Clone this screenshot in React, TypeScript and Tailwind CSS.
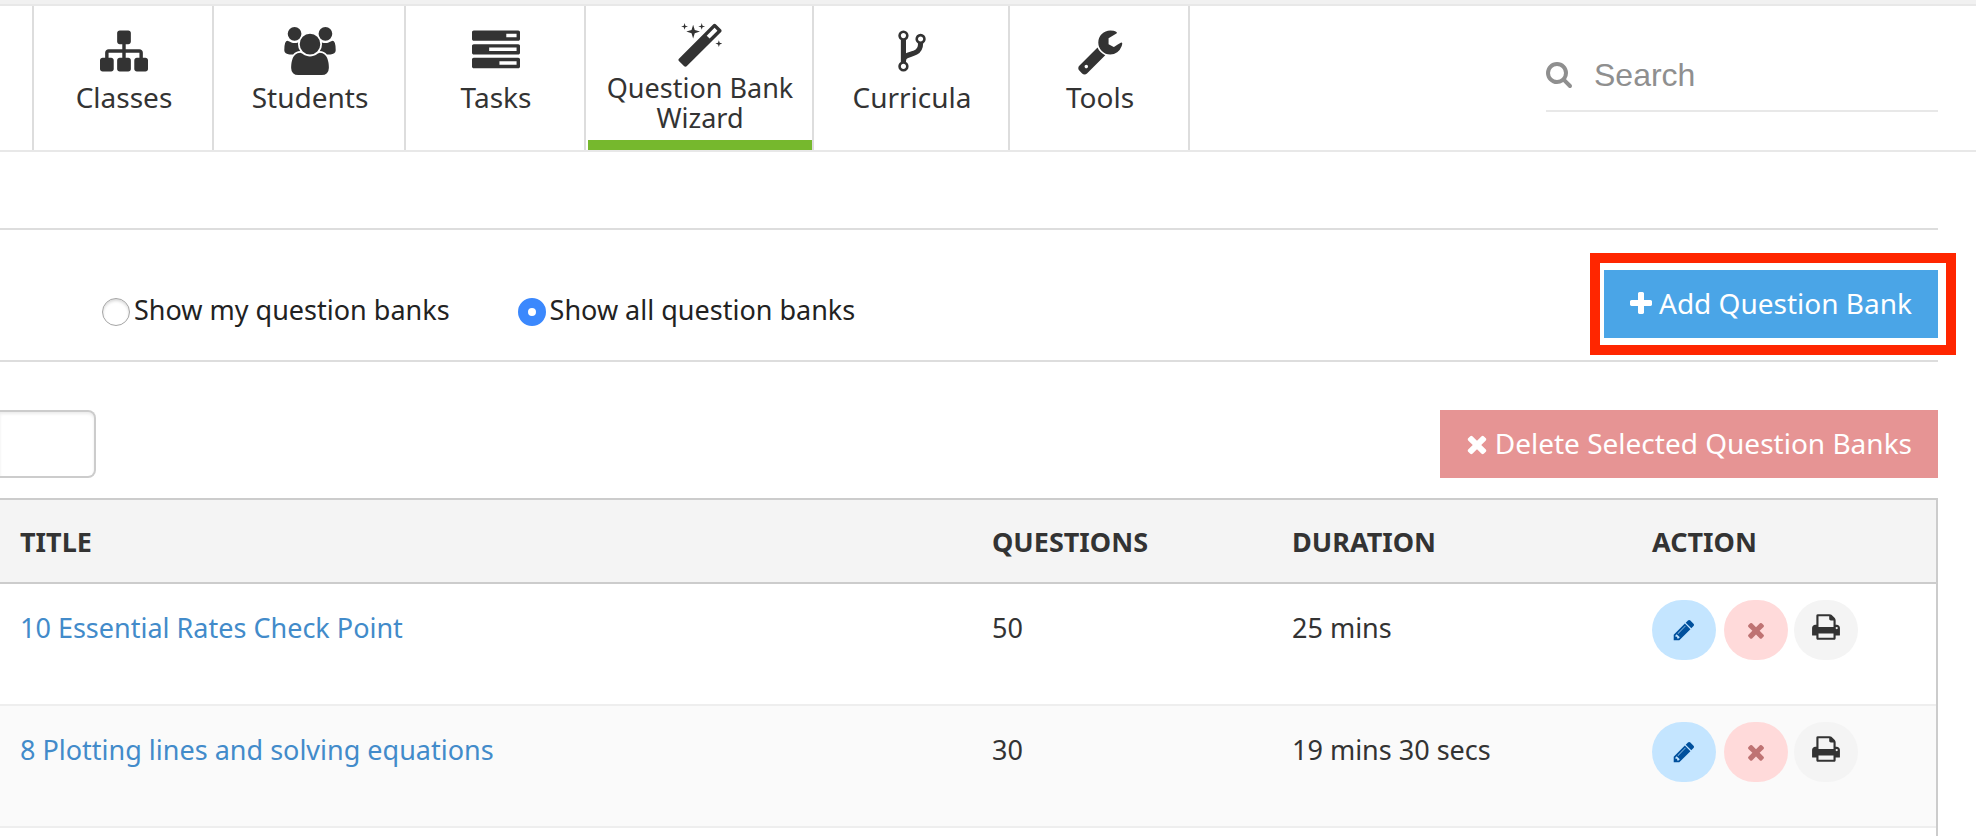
import { useState } from "react";
import clsx from "clsx";

type Glyph = { d: string; viewBox?: string };

const glyphs = {
  sitemap: {
    d: "M1792 1248v320q0 40-28 68t-68 28h-320q-40 0-68-28t-28-68v-320q0-40 28-68t68-28h96v-192h-512v192h96q40 0 68 28t28 68v320q0 40-28 68t-68 28h-320q-40 0-68-28t-28-68v-320q0-40 28-68t68-28h96v-192h-512v192h96q40 0 68 28t28 68v320q0 40-28 68t-68 28h-320q-40 0-68-28t-28-68v-320q0-40 28-68t68-28h96v-192q0-52 38-90t90-38h512v-192h-96q-40 0-68-28t-28-68v-320q0-40 28-68t68-28h320q40 0 68 28t28 68v320q0 40-28 68t-68 28h-96v192h512q52 0 90 38t38 90v192h96q40 0 68 28t28 68z",
  },
  users: {
    viewBox: "64 0 1920 1792",
    d: "M657 896q-162 5-265 128h-134q-82 0-138-40.5t-56-118.5q0-353 124-353 6 0 43.5 21t97.5 42.5 119 21.5q67 0 133-23-5 37-5 66 0 139 81 256zm1071 637q0 120-73 189.5t-194 69.5h-874q-121 0-194-69.5t-73-189.5q0-53 3.5-103.5t14-109 26.5-108.5 43-97.5 62-81 85.5-53.5 111.5-20q10 0 43 21.5t73 48 107 48 135 21.5 135-21.5 107-48 73-48 43-21.5q61 0 111.5 20t85.5 53.5 62 81 43 97.5 26.5 108.5 14 109 3.5 103.5zm-1024-1277q0 106-75 181t-181 75-181-75-75-181 75-181 181-75 181 75 75 181zm704 384q0 159-112.5 271.5t-271.5 112.5-271.5-112.5-112.5-271.5 112.5-271.5 271.5-112.5 271.5 112.5 112.5 271.5zm576 225q0 78-56 118.5t-138 40.5h-134q-103-123-265-128 81-117 81-256 0-29-5-66 66 23 133 23 59 0 119-21.5t97.5-42.5 43.5-21q124 0 124 353zm-128-609q0 106-75 181t-181 75-181-75-75-181 75-181 181-75 181 75 75 181z",
  },
  tasks: {
    d: "M1024 1408h640v-128h-640v128zm-384-512h1024v-128h-1024v128zm640-512h384v-128h-384v128zm512 832v256q0 26-19 45t-45 19h-1664q-26 0-45-19t-19-45v-256q0-26 19-45t45-19h1664q26 0 45 19t19 45zm0-512v256q0 26-19 45t-45 19h-1664q-26 0-45-19t-19-45v-256q0-26 19-45t45-19h1664q26 0 45 19t19 45zm0-512v256q0 26-19 45t-45 19h-1664q-26 0-45-19t-19-45v-256q0-26 19-45t45-19h1664q26 0 45 19t19 45z",
  },
  magic: {
    d: "M1254 581l293-293-107-107-293 293zm447-293q0 27-18 45l-1286 1286q-18 18-45 18t-45-18l-198-198q-18-18-18-45t18-45l1286-1286q18-18 45-18t45 18l198 198q18 18 18 45zm-1351-190l98 30-98 30-30 98-30-98-98-30 98-30 30-98zm350 162l196 60-196 60-60 196-60-196-196-60 196-60 60-196zm930 478l98 30-98 30-30 98-30-98-98-30 98-30 30-98zm-640-640l98 30-98 30-30 98-30-98-98-30 98-30 30-98z",
  },
  fork: {
    d: "M672 1472q0-40-28-68t-68-28-68 28-28 68 28 68 68 28 68-28 28-68zm0-1152q0-40-28-68t-68-28-68 28-28 68 28 68 68 28 68-28 28-68zm640 128q0-40-28-68t-68-28-68 28-28 68 28 68 68 28 68-28 28-68zm96 0q0 52-26 96.5t-70 69.5q-2 287-226 414-67 38-203 81-128 40-169.5 71t-41.5 100v26q44 25 70 69.5t26 96.5q0 80-56 136t-136 56-136-56-56-136q0-52 26-96.5t70-69.5v-820q-44-25-70-69.5t-26-96.5q0-80 56-136t136-56 136 56 56 136q0 52-26 96.5t-70 69.5v497q54-26 154-57 55-17 87.5-29.5t70.5-31 59-39.5 40.5-51 28-69.5 8.5-91.5q-44-25-70-69.5t-26-96.5q0-80 56-136t136-56 136 56 56 136z",
  },
  wrench: {
    d: "M448 1472q0-26-19-45t-45-19-45 19-19 45 19 45 45 19 45-19 19-45zm644-420l-682 682q-37 37-90 37-52 0-91-37l-106-108q-38-36-38-90 0-53 38-91l681-681q39 98 114.5 173.5t173.5 114.5zm634-435q0 39-23 106-47 134-164.5 217.5t-258.5 83.5q-185 0-316.5-131.5t-131.5-316.5 131.5-316.5 316.5-131.5q58 0 121.5 16.5t107.5 46.5q16 11 16 28t-16 28l-293 169v224l193 107q5-3 79-48.5t135.5-81 70.5-35.5q15 0 23.5 10t8.5 25z",
  },
  search: {
    viewBox: "64 128 1664 1664",
    d: "M1216 832q0-185-131.5-316.5t-316.5-131.5-316.5 131.5-131.5 316.5 131.5 316.5 316.5 131.5 316.5-131.5 131.5-316.5zm512 832q0 52-38 90t-90 38q-54 0-90-38l-343-342q-179 124-399 124-143 0-273.5-55.5t-225-150-150-225-55.5-273.5 55.5-273.5 150-225 225-150 273.5-55.5 273.5 55.5 225 150 150 225 55.5 273.5q0 220-124 399l343 343q37 37 37 90z",
  },
  plus: {
    viewBox: "192 0 1408 1792",
    d: "M1600 736v192q0 40-28 68t-68 28h-416v416q0 40-28 68t-68 28h-192q-40 0-68-28t-28-68v-416h-416q-40 0-68-28t-28-68v-192q0-40 28-68t68-28h416v-416q0-40 28-68t68-28h192q40 0 68 28t28 68v416h416q40 0 68 28t28 68z",
  },
  times: {
    viewBox: "192 0 1408 1792",
    d: "M1490 1322q0 40-28 68l-136 136q-28 28-68 28t-68-28l-294-294-294 294q-28 28-68 28t-68-28l-136-136q-28-28-28-68t28-68l294-294-294-294q-28-28-28-68t28-68l136-136q28-28 68-28t68 28l294 294 294-294q28-28 68-28t68 28l136 136q28 28 28 68t-28 68l-294 294 294 294q28 28 28 68z",
  },
  pencil: {
    d: "M491 1536l91-91-235-235-91 91v107h128v128h107zm523-928q0-22-22-22-10 0-17 7l-542 542q-7 7-7 17 0 22 22 22 10 0 17-7l542-542q7-7 7-17zm-54-192l416 416-832 832h-416v-416zm683 96q0 53-37 90l-166 166-416-416 166-165q36-38 90-38 53 0 91 38l235 234q37 39 37 91z",
  },
  print: {
    d: "M448 1536h896v-256h-896v256zm0-640h896v-384h-160q-40 0-68-28t-28-68v-160h-640v640zm1152 64q0-26-19-45t-45-19-45 19-19 45 19 45 45 19 45-19 19-45zm128 0v416q0 13-9.5 22.5t-22.5 9.5h-224v160q0 40-28 68t-68 28h-960q-40 0-68-28t-28-68v-160h-224q-13 0-22.5-9.5t-9.5-22.5v-416q0-79 56.5-135.5t135.5-56.5h64v-544q0-40 28-68t68-28h672q40 0 88 20t76 48l152 152q28 28 48 76t20 88v256h64q79 0 135.5 56.5t56.5 135.5z",
  },
} satisfies Record<string, Glyph>;

function Icon({ name, className }: { name: keyof typeof glyphs; className: string }) {
  const glyph: Glyph = glyphs[name];
  return (
    <svg viewBox={glyph.viewBox ?? "0 0 1792 1792"} className={clsx("shrink-0", className)} fill="currentColor" aria-hidden="true">
      <path d={glyph.d} />
    </svg>
  );
}

const navItems: { label: string; icon: keyof typeof glyphs; width: string; active?: boolean }[] = [
  { label: "Classes", icon: "sitemap", width: "w-[180px]" },
  { label: "Students", icon: "users", width: "w-[192px]" },
  { label: "Tasks", icon: "tasks", width: "w-[180px]" },
  { label: "Question Bank Wizard", icon: "magic", width: "w-[228px]", active: true },
  { label: "Curricula", icon: "fork", width: "w-[196px]" },
  { label: "Tools", icon: "wrench", width: "w-[182px]" },
];

const banks = [
  { title: "10 Essential Rates Check Point", questions: 50, duration: "25 mins" },
  { title: "8 Plotting lines and solving equations", questions: 30, duration: "19 mins 30 secs" },
];

function Header() {
  return (
    <header className="flex justify-between border-b-2 border-[#e8e8e8]">
      <nav className="flex h-36 pl-8">
        {navItems.map((item) => (
          <a
            key={item.label}
            href="#"
            aria-current={item.active ? "page" : undefined}
            className={clsx("flex flex-col border-l-2 border-[#ddd] pl-0.5 text-center text-[#333] last:border-r-2", item.width)}
          >
            <span className={clsx("flex flex-1 flex-col items-center", item.active ? "gap-0.5 px-4 pt-[17px]" : "pt-[21px]")}>
              <Icon name={item.icon} className="h-12 w-[52px]" />
              <span className={item.active ? "text-[27px] leading-[30px]" : "text-[28px] leading-[44px]"}>{item.label}</span>
            </span>
            {item.active && <span className="h-[10px] bg-[#76b82d]" />}
          </a>
        ))}
      </nav>
      <label className="mr-[38px] mt-9 flex h-[70px] w-[392px] items-center gap-[22px] border-b-2 border-[#e8e8e8] pb-0.5 text-[#8f8f8f]">
        <Icon name="search" className="size-[26px]" />
        <input
          type="search"
          aria-label="Search"
          placeholder="Search"
          className="min-w-0 flex-1 bg-transparent font-['Liberation_Sans',Arial,sans-serif] text-[32px] outline-none placeholder:text-[#8f8f8f]"
        />
      </label>
    </header>
  );
}

function ScopeRadio({ label, checked, onSelect }: { label: string; checked: boolean; onSelect: () => void }) {
  return (
    <label className="flex items-center gap-1 text-[27px] leading-6 text-[#222]">
      <input
        type="radio"
        name="scope"
        checked={checked}
        onChange={onSelect}
        className="size-7 appearance-none rounded-full border border-[#a5a5a5] bg-white shadow-[inset_0_2px_3px_rgba(0,0,0,0.15)] checked:border-10 checked:border-[#3b88fd] checked:shadow-none"
      />
      <span className="pb-1">{label}</span>
    </label>
  );
}

function RowActions({ title }: { title: string }) {
  return (
    <div className="flex">
      <button type="button" aria-label={`Edit ${title}`} className="mr-2 flex h-[60px] w-16 items-center justify-center rounded-[30px] bg-[#c4e5ff] text-[#00509d]">
        <Icon name="pencil" className="size-6" />
      </button>
      <button type="button" aria-label={`Delete ${title}`} className="mr-1.5 flex h-[60px] w-16 items-center justify-center rounded-[30px] bg-[#ffdada] text-[#bf7373]">
        <Icon name="times" className="size-6" />
      </button>
      <button type="button" aria-label={`Print ${title}`} className="flex h-[60px] w-16 items-center justify-center rounded-[30px] bg-[#f4f4f4] pb-1.5 text-[#333]">
        <Icon name="print" className="size-[30px]" />
      </button>
    </div>
  );
}

export default function App() {
  const [scope, setScope] = useState<"mine" | "all">("all");

  return (
    <div className="flex min-h-screen flex-col bg-white font-['Noto_Sans',sans-serif] text-[#333]">
      <div className="h-1.5 border-b-2 border-[#e8e8e8] bg-[#f1f1f1]" />
      <Header />
      <main className="mr-[38px] flex flex-1 flex-col pt-[76px]">
        <section className="flex items-end justify-between border-y-2 border-[#ddd] pt-10 pb-[22px]">
          <div className="flex gap-[68px] pb-3 pl-[102px]">
            <ScopeRadio label="Show my question banks" checked={scope === "mine"} onSelect={() => setScope("mine")} />
            <ScopeRadio label="Show all question banks" checked={scope === "all"} onSelect={() => setScope("all")} />
          </div>
          <div className="relative">
            <button type="button" className="flex h-[68px] items-center gap-[7px] bg-[#4aa5e7] px-[26px] text-[28px] text-white">
              <Icon name="plus" className="h-7 w-[22px]" />
              <span className="pb-0.5">Add Question Bank</span>
            </button>
            <span className="pointer-events-none absolute -top-[17px] -right-[18px] -bottom-[17px] -left-[14px] border-10 border-[#ff2600]" />
          </div>
        </section>

        <div className="flex justify-between pt-12 pb-5">
          <input
            type="text"
            aria-label="Filter question banks"
            className="h-[68px] w-24 rounded-r-lg border-2 border-l-0 border-[#ccc] px-4 text-[28px] shadow-[inset_0_2px_3px_rgba(0,0,0,0.08)] outline-none"
          />
          <button type="button" className="flex h-[68px] items-center gap-[7px] bg-[#e69494] px-[26px] text-[28px] text-white">
            <Icon name="times" className="h-7 w-[22px]" />
            <span className="pb-0.5">Delete Selected Question Banks</span>
          </button>
        </div>

        <div className="flex-1 border-t-2 border-r-2 border-[#ccc]">
          <table className="w-full table-fixed border-separate border-spacing-0 text-left">
            <thead>
              <tr className="h-[84px] bg-[#f4f4f4] text-[27px] uppercase">
                <th className="border-b-2 border-[#ccc] px-5 pt-0.5">Title</th>
                <th className="w-[300px] border-b-2 border-[#ccc] px-5 pt-0.5">Questions</th>
                <th className="w-[360px] border-b-2 border-[#ccc] px-5 pt-0.5">Duration</th>
                <th className="w-[304px] border-b-2 border-[#ccc] px-5 pt-0.5">Action</th>
              </tr>
            </thead>
            <tbody>
              {banks.map((bank) => (
                <tr key={bank.title} className="h-[122px] align-top text-[27px] leading-[56px] even:bg-[#fafafa]">
                  <td className="border-b-2 border-[#eee] px-5 pt-4">
                    <a href="#" className="text-[#428bca]">
                      {bank.title}
                    </a>
                  </td>
                  <td className="border-b-2 border-[#eee] px-5 pt-4">{bank.questions}</td>
                  <td className="border-b-2 border-[#eee] px-5 pt-4">{bank.duration}</td>
                  <td className="border-b-2 border-[#eee] px-5 pt-4">
                    <RowActions title={bank.title} />
                  </td>
                </tr>
              ))}
            </tbody>
          </table>
        </div>
      </main>
    </div>
  );
}
